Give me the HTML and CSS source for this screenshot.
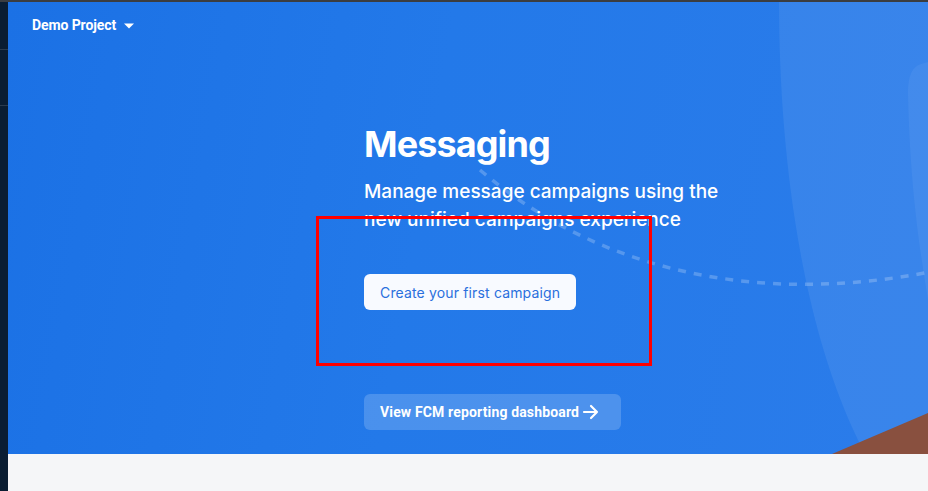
FILE: index.html
```html
<!DOCTYPE html>
<html>
<head>
<meta charset="utf-8">
<link rel="stylesheet" href="styles.css">
</head>
<body>
<div class="page">
  <aside class="sidebar">
    <div class="side-sec side-top"></div>
    <div class="side-sec side-mid"></div>
  </aside>
  <main class="main">
    <section class="hero">
      <svg class="deco" viewBox="8 2 920 452" width="920" height="452" aria-hidden="true">
        <path d="M779 2 C 779 150, 800 330, 865 454 L 928 454 L 928 2 Z" fill="rgba(255,255,255,0.07)"/>
        <path d="M928 62 L 921 64 Q 907 68 908 96 C 910 180, 918 240, 928 300 Z" fill="rgba(255,255,255,0.05)"/>
        <path d="M480 170 C 600 272, 760 307, 940 270" fill="none" stroke="rgba(255,255,255,0.22)" stroke-width="3.5" stroke-dasharray="8 8"/>
        <path d="M832 454 L 928 413 L 928 454 Z" fill="#89503f"/>
      </svg>
      <header class="topbar">
        <span class="project">Demo Project</span>
        <svg class="caret" width="12" height="8" viewBox="0 0 12 8"><path d="M1 1.5 L11 1.5 L6 6.5 Z" fill="#fff"/></svg>
      </header>
      <div class="content">
        <h1 class="title">Messaging</h1>
        <p class="subtitle">Manage message campaigns using the<br>new unified campaigns experience</p>
        <button class="btn-primary">Create your first campaign</button>
        <button class="btn-secondary">View FCM reporting dashboard
          <svg class="arrow" width="18" height="18" viewBox="0 0 18 18"><path d="M2 9 H15 M9 3 L15 9 L9 15" fill="none" stroke="#fff" stroke-width="2.2" stroke-linecap="round" stroke-linejoin="round"/></svg>
        </button>
      </div>
    </section>
    <section class="lower"></section>
  </main>
  <div class="annotation"></div>
</div>
</body>
</html>
```
FILE: styles.css
```css
* { box-sizing: border-box; }
html, body { margin: 0; padding: 0; }
body { width: 928px; height: 491px; overflow: hidden; background: #f5f6f8; font-family: Roboto, "Liberation Sans", sans-serif; }
.page { position: relative; display: flex; height: 491px; border-top: 2px solid #3b3d40; }
.sidebar { width: 8px; flex: none; background: #0a1d32; display: flex; flex-direction: column; }
.side-sec { border-bottom: 1px solid #2b3b4d; }
.side-top { height: 48px; }
.side-mid { height: 56px; }
.main { flex: 1; display: flex; flex-direction: column; }
.hero { position: relative; height: 452px; flex: none; overflow: hidden; background: linear-gradient(100deg, #1b71e5 0%, #2379e9 45%, #2b7cea 100%); }
.deco { position: absolute; left: 0; top: 0; }
.lower { flex: 1; background: #f5f6f8; }
.topbar { position: relative; display: flex; align-items: center; height: 46px; padding-left: 24px; gap: 7px; }
.project { color: #fff; font-weight: 700; font-size: 14px; letter-spacing: -0.1px; }
.caret { margin-top: 1px; }
.content { position: relative; display: flex; flex-direction: column; align-items: flex-start; padding-left: 356px; padding-top: 74px; }
.title { margin: 0; color: #fff; font-family: Inter, "Open Sans", sans-serif; font-weight: 700; font-size: 36px; line-height: 44px; letter-spacing: -0.9px; }
.subtitle { margin: 12px 0 0; color: #fff; font-family: Inter, "Open Sans", sans-serif; font-weight: 500; font-size: 19px; line-height: 28px; letter-spacing: 0; }
.btn-primary { margin-top: 40px; height: 36px; padding: 0 16px; border: none; border-radius: 6px; background: #f8faff; color: #2a6fdd; font-family: Inter, "Open Sans", sans-serif; font-size: 14px; font-weight: 400; letter-spacing: 0.15px; cursor: pointer; }
.btn-secondary { margin-top: 84px; display: flex; align-items: center; gap: 3px; height: 36px; width: 257px; padding: 0 16px; border: none; border-radius: 6px; background: rgba(255,255,255,0.18); color: #fff; font-family: Roboto, "Liberation Sans", sans-serif; font-size: 14px; font-weight: 700; letter-spacing: 0.15px; cursor: pointer; }
.annotation { position: absolute; left: 316px; top: 214px; width: 336px; height: 150px; border: 3px solid #ff0000; pointer-events: none; }
```
